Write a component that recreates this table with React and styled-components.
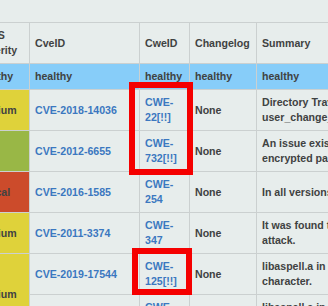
import React from "react";
import styled, { createGlobalStyle } from "styled-components";

const GlobalStyle = createGlobalStyle`
  html, body {
    margin: 0;
    padding: 0;
    background: #e7edec;
  }
`;

const Viewport = styled.div`
  position: relative;
  width: 328px;
  height: 306px;
  overflow: hidden;
  background: #e7edec;
  font-family: "Liberation Sans", Arial, sans-serif;
`;

const Table = styled.table`
  border-collapse: collapse;
  table-layout: fixed;
  width: 926px;
  margin: 22px 0 0 -30px;
  font-size: 10.6px;
  line-height: 15px;
  font-weight: bold;
  color: #3f4242;
`;

const Cell = styled.td`
  border: 1px solid #cbd0d0;
  padding: 5px 5px;
  vertical-align: middle;
  text-align: left;
  background: ${(p) => p.$bg || "transparent"};
`;

const HeadCell = styled(Cell).attrs({ as: "th" })`
  font-weight: bold;
`;

const HealthyRow = styled.tr`
  background: #87cdf9;
`;

const Link = styled.a`
  color: #3b78c0;
  text-decoration: none;
`;

const Line = styled.span`
  display: block;
  white-space: nowrap;
`;

const Highlight = styled.div`
  position: absolute;
  left: ${(p) => p.$x}px;
  top: ${(p) => p.$y}px;
  width: ${(p) => p.$w}px;
  height: ${(p) => p.$h}px;
  border: 6px solid #f50000;
  box-sizing: border-box;
  pointer-events: none;
`;

const severityColors = {
  medium: "#dfd23a",
  low: "#99b746",
  critical: "#cc4b2b",
};

const rows = [
  {
    severity: "medium",
    cve: "CVE-2018-14036",
    cwe: "22[!!]",
    summary: [
      "Directory Traversal with ../ sequences occurs in AccountsService before 0.6.50 because of an insufficient path check in",
      "user_change_icon_file_authorized_cb() in user.c.",
    ],
  },
  {
    severity: "low",
    cve: "CVE-2012-6655",
    cwe: "732[!!]",
    summary: [
      "An issue exists AccountService 0.6.37 in the user_change_password_authorized_cb() function in user.c which could let a local users obtain",
      "encrypted passwords.",
    ],
  },
  {
    severity: "critical",
    cve: "CVE-2016-1585",
    cwe: "254",
    summary: ["In all versions of AppArmor mount rules are accidentally widened when compiled."],
  },
  {
    severity: "medium",
    cve: "CVE-2011-3374",
    cwe: "347",
    summary: [
      "It was found that apt-key in apt, all versions, do not correctly validate gpg keys with the master keyring, leading to a potential man-in-the-middle",
      "attack.",
    ],
  },
  {
    severity: "medium",
    span: 2,
    cve: "CVE-2019-17544",
    cwe: "125[!!]",
    summary: [
      "libaspell.a in GNU Aspell before 0.60.8 has a stack-based buffer over-read in acommon::unescape in common/getdata.cpp via an isolated \\",
      "character.",
    ],
  },
  {
    severity: null,
    cve: "CVE-2019-20433",
    cwe: "125[!!]",
    summary: [
      "libaspell.a in GNU Aspell before 0.60.8 has a buffer over-read for a string ending with a single '\\0' byte, if the encoding is set to",
      "ucs-2 or ucs-4 outside of the application, as demonstrated by the ASPELL_ENCODING environment variable.",
    ],
  },
];

const CweLink = ({ id }) => (
  <Link href="#">
    CWE-
    <wbr />
    {id}
  </Link>
);

export default function App() {
  return (
    <Viewport>
      <GlobalStyle />
      <Table>
        <colgroup>
          <col style={{ width: 59 }} />
          <col style={{ width: 110 }} />
          <col style={{ width: 50 }} />
          <col style={{ width: 67 }} />
          <col style={{ width: 640 }} />
        </colgroup>
        <thead>
          <tr>
            <HeadCell>CVSS Severity</HeadCell>
            <HeadCell>CveID</HeadCell>
            <HeadCell>CweID</HeadCell>
            <HeadCell>Changelog</HeadCell>
            <HeadCell>Summary</HeadCell>
          </tr>
        </thead>
        <tbody>
          <HealthyRow>
            <Cell>healthy</Cell>
            <Cell>healthy</Cell>
            <Cell>healthy</Cell>
            <Cell>healthy</Cell>
            <Cell>healthy</Cell>
          </HealthyRow>
          {rows.map((r) => (
            <tr key={r.cve}>
              {r.severity && (
                <Cell $bg={severityColors[r.severity]} rowSpan={r.span || 1}>
                  {r.severity}
                </Cell>
              )}
              <Cell>
                <Link href="#">{r.cve}</Link>
              </Cell>
              <Cell>
                <CweLink id={r.cwe} />
              </Cell>
              <Cell>None</Cell>
              <Cell>
                {r.summary.map((l) => (
                  <Line key={l}>{l}</Line>
                ))}
              </Cell>
            </tr>
          ))}
        </tbody>
      </Table>
      <Highlight $x={129} $y={82} $w={64} $h={93} />
      <Highlight $x={132} $y={248} $w={60} $h={47} />
    </Viewport>
  );
}
